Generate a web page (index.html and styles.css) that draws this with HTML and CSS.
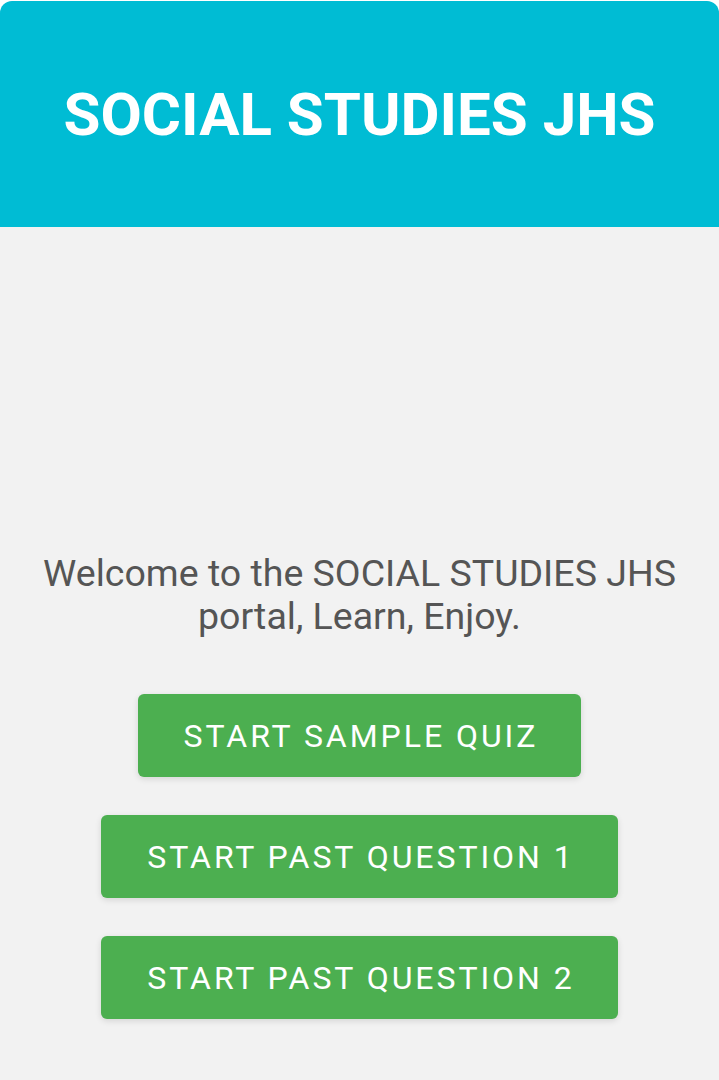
FILE: index.html
```html
<!DOCTYPE html>
<html lang="en">
<head>
  <meta charset="UTF-8" />
  <title>Social Studies JHS</title>
  <link rel="stylesheet" href="styles.css">
</head>
<body>
  <header class="top-bar">
    <h1 class="top-title">SOCIAL STUDIES JHS</h1>
  </header>

  <main class="home">
    <p class="welcome">Welcome to the SOCIAL STUDIES JHS portal, Learn, Enjoy.</p>
    <div class="actions">
      <button class="start-btn">START SAMPLE QUIZ</button>
      <button class="start-btn">START PAST QUESTION 1</button>
      <button class="start-btn">START PAST QUESTION 2</button>
    </div>
  </main>
</body>
</html>
```

FILE: styles.css
```css
/* page frame */
html, body {
  margin: 0;
  padding: 0;
  height: 100%;
  background: white;
  font-family: Roboto, 'Liberation Sans', sans-serif;
}

body {
  display: flex;
  flex-direction: column;
  padding-top: 1px;
  box-sizing: border-box;
}

/* cyan title bar */
.top-bar {
  height: 226px;
  background-color: #00bcd4;
  border-radius: 12px 12px 0 0;
  display: flex;
  align-items: center;
  justify-content: center;
}

.top-title {
  margin: 0;
  color: white;
  font-size: 60px;
  font-weight: bold;
}

/* grey content area */
.home {
  flex: 1;
  background: #f2f2f2;
  display: flex;
  flex-direction: column;
  align-items: center;
  padding: 325px 30px 0;
}

.welcome {
  margin: 0;
  color: #555;
  font-size: 37.5px;
  line-height: 43px;
  text-align: center;
}

.actions {
  margin-top: 56px;
  display: flex;
  flex-direction: column;
  align-items: center;
  gap: 38px;
}

.start-btn {
  height: 83px;
  padding: 0 43px 0 46px;
  border: none;
  border-radius: 6px;
  background-color: #4caf50;
  color: white;
  font-family: Roboto, 'Liberation Sans', sans-serif;
  font-size: 32px;
  letter-spacing: 2.95px;
  box-shadow: 0 2px 6px rgba(0, 0, 0, 0.12);
  cursor: pointer;
}
```
